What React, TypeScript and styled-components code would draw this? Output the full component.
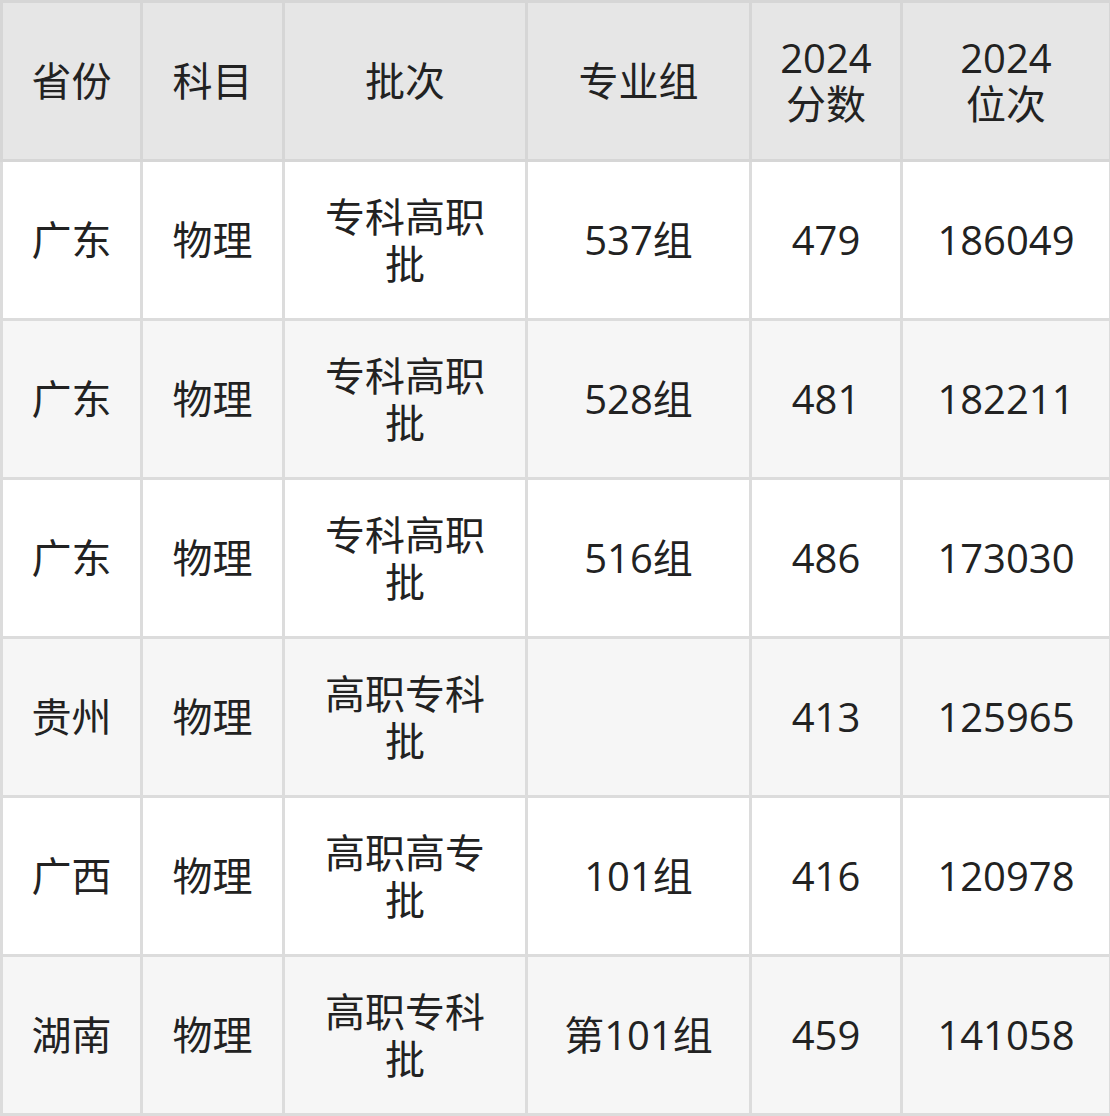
import { styled, createGlobalStyle } from 'styled-components';

const GlobalStyle = createGlobalStyle`
  html, body {
    margin: 0;
    padding: 0;
    background: #ffffff;
  }
`;

type Row = {
  province: string;
  subject: string;
  batch: string;
  group: string;
  score: string;
  rank: string;
};

const rows: Row[] = [
  { province: '广东', subject: '物理', batch: '专科高职批', group: '537组', score: '479', rank: '186049' },
  { province: '广东', subject: '物理', batch: '专科高职批', group: '528组', score: '481', rank: '182211' },
  { province: '广东', subject: '物理', batch: '专科高职批', group: '516组', score: '486', rank: '173030' },
  { province: '贵州', subject: '物理', batch: '高职专科批', group: '', score: '413', rank: '125965' },
  { province: '广西', subject: '物理', batch: '高职高专批', group: '101组', score: '416', rank: '120978' },
  { province: '湖南', subject: '物理', batch: '高职专科批', group: '第101组', score: '459', rank: '141058' },
];

const widths = [140, 142, 243, 224, 151, 209];

const App = () => {
  return (
    <>
      <GlobalStyle />
      <ScoreTable>
        <colgroup>
          {widths.map((w, i) => (
            <col key={i} style={{ width: w }} />
          ))}
        </colgroup>
        <thead>
          <tr>
            <HeadCell>省份</HeadCell>
            <HeadCell>科目</HeadCell>
            <HeadCell>批次</HeadCell>
            <HeadCell>专业组</HeadCell>
            <HeadCell>
              2024
              <br />
              分数
            </HeadCell>
            <HeadCell>
              2024
              <br />
              位次
            </HeadCell>
          </tr>
        </thead>
        <tbody>
          {rows.map((r, i) => (
            <BodyRow key={i} $striped={i % 2 === 1}>
              <Cell>{r.province}</Cell>
              <Cell>{r.subject}</Cell>
              <Cell>{r.batch}</Cell>
              <Cell>{r.group}</Cell>
              <Cell>{r.score}</Cell>
              <Cell>{r.rank}</Cell>
            </BodyRow>
          ))}
        </tbody>
      </ScoreTable>
    </>
  );
};

const ScoreTable = styled.table`
  width: 1109px;
  table-layout: fixed;
  border-collapse: collapse;
  font-family: 'Open Sans', 'Noto Sans CJK SC', sans-serif;
  font-size: 40px;
  color: #222222;
`;

const HeadCell = styled.th`
  height: 156px;
  padding: 0 22px;
  background: #e6e6e6;
  border: 3px solid #d6d6d6;
  font-weight: 400;
  line-height: 1.16;
  text-align: center;
  vertical-align: middle;
`;

const BodyRow = styled.tr<{ $striped: boolean }>`
  background: ${(p) => (p.$striped ? '#f6f6f6' : '#ffffff')};
`;

const Cell = styled.td`
  height: 156px;
  padding: 0 22px;
  border: 3px solid #dcdcdc;
  line-height: 1.18;
  text-align: center;
  vertical-align: middle;
`;

export default App;
